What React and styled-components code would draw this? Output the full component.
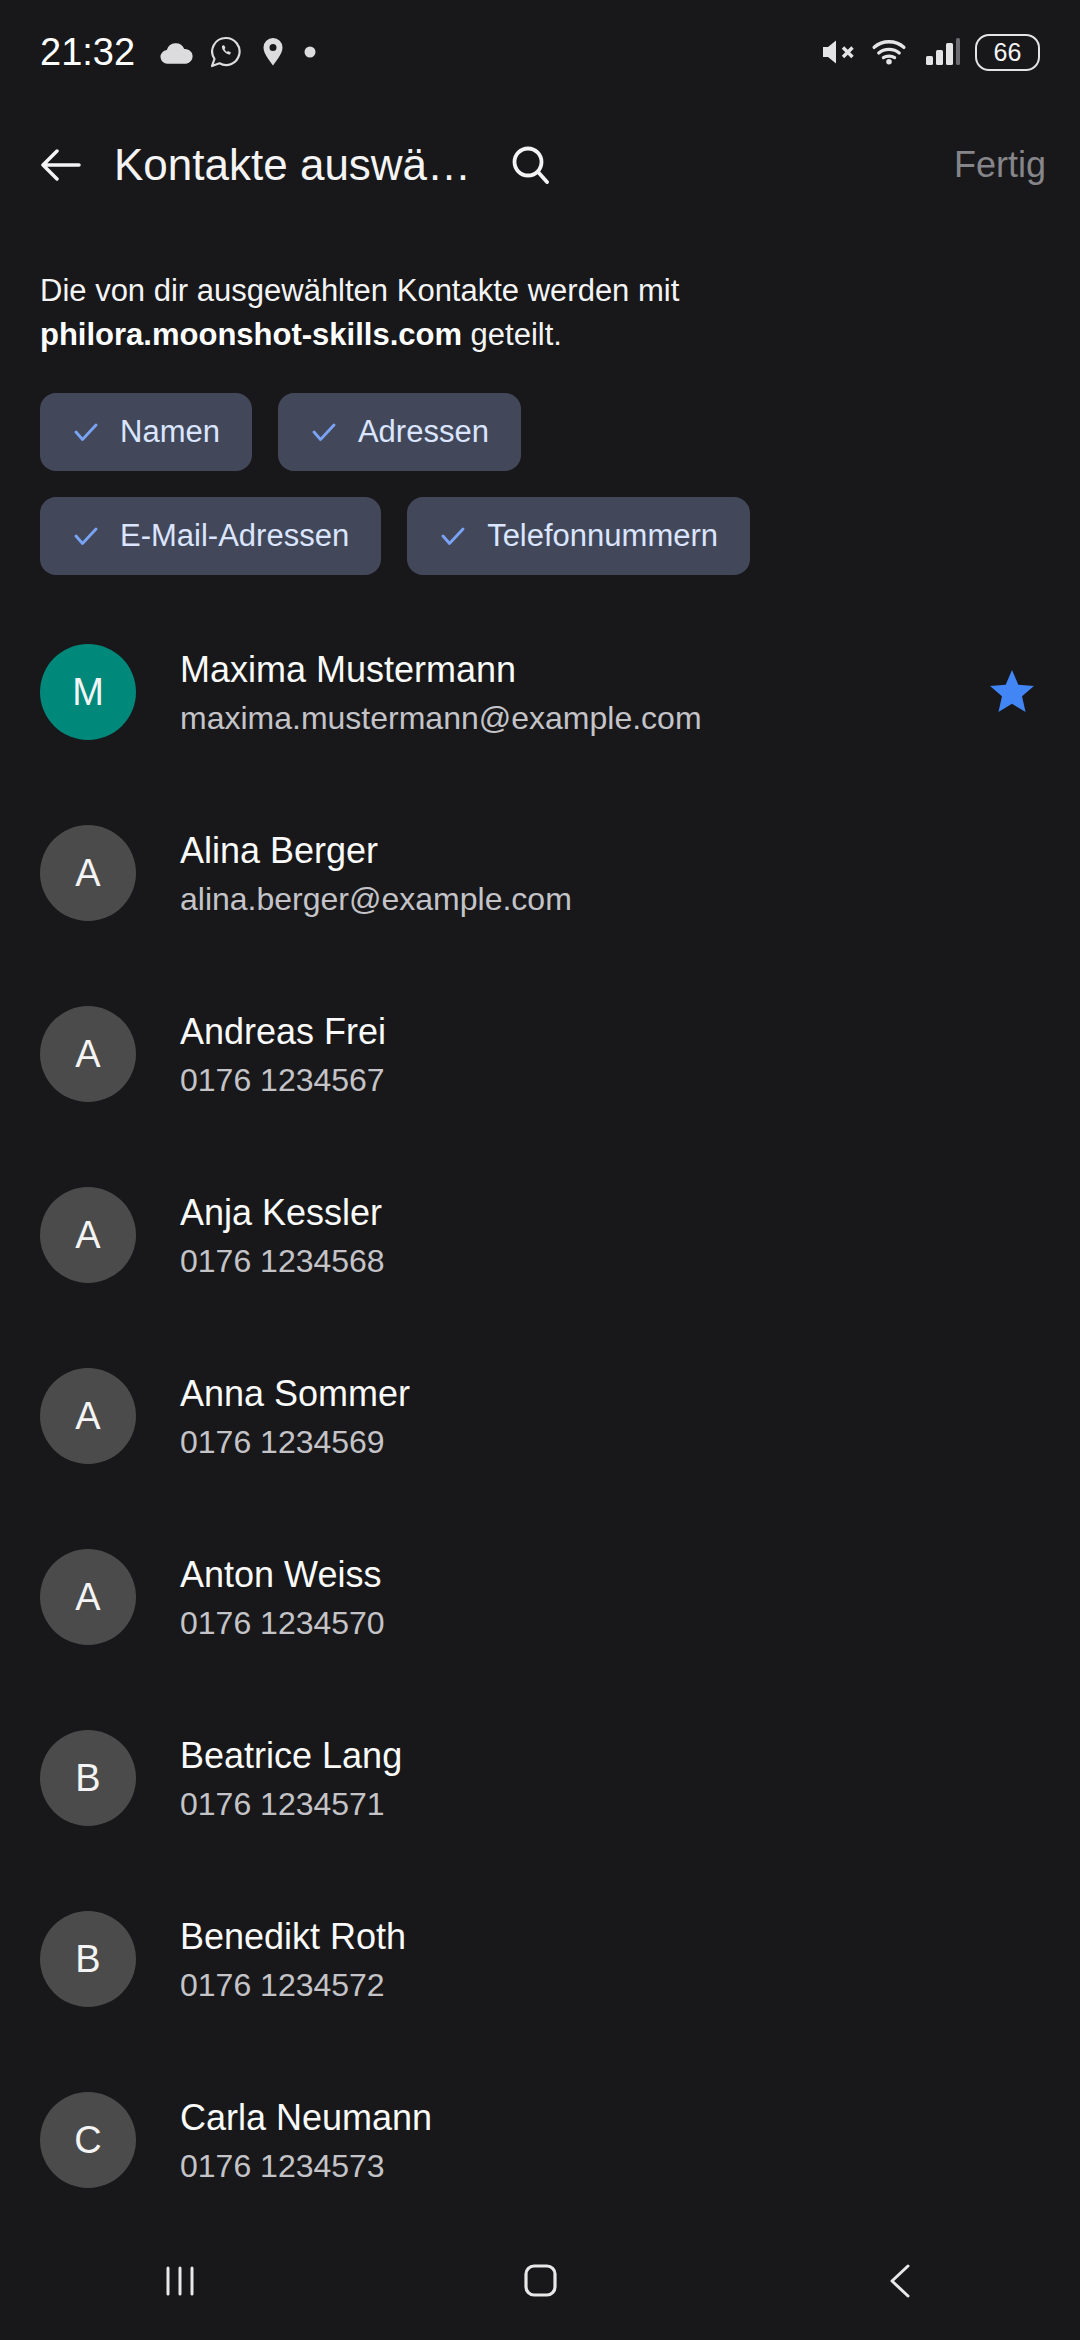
import React from "react";
import styled, { createGlobalStyle } from "styled-components";

const Global = createGlobalStyle`
  html, body { margin: 0; padding: 0; background: #18181b; height: 2340px; overflow: hidden; }
  body { font-family: "Liberation Sans", Arial, sans-serif; }
`;
const Root = styled.div`position: relative; width: 1080px; height: 2340px; overflow: hidden;`;
const Page = styled.div`
  width: 1080px; height: 2340px; background: #18181b; color: #fff;
  display: flex; flex-direction: column; overflow: hidden;
`;
const Icon = styled.svg`display: block; flex: none; margin-left: ${p => p.$ml || 0}px; margin-top: ${p => p.$mt || 0}px;`;
const StatusBar = styled.div`
  height: 104px; padding: 0 40px; display: flex; align-items: center; justify-content: space-between; flex: none;
`;
const StatusGroup = styled.div`display: flex; align-items: center;`;
const Clock = styled.span`font-size: 38px; color: #fff; width: 120px; line-height: 1;`;
const Battery = styled.span`
  width: 65px; height: 37px; box-sizing: border-box; border: 2px solid #e4e4e7; border-radius: 14px;
  font-size: 25px; color: #f4f4f5; display: flex; align-items: center; justify-content: center; margin-left: 15px;
`;
const Header = styled.div`
  height: 122px; padding: 0 34px 0 41px; display: flex; align-items: center; flex: none;
`;
const Title = styled.h1`
  margin: 0 0 0 33px; font-weight: 400; font-size: 44px; color: #f4f4f5; width: 357px; white-space: nowrap; line-height: 56px;
`;
const Done = styled.span`font-size: 36px; color: #86868a; margin-left: auto;`;
const Intro = styled.p`
  margin: 0; padding: 43px 40px 0; font-size: 31px; line-height: 44px; color: #f4f4f5;
  strong { color: #fff; font-weight: 700; }
`;
const Chips = styled.div`
  display: flex; flex-direction: column; gap: 26px; padding: 36px 40px 0;
`;
const ChipRow = styled.div`display: flex; gap: 26px;`;
const Chip = styled.div`
  height: 78px; box-sizing: border-box; padding: 0 32px 0 34px; border-radius: 16px; background: #424859;
  display: flex; align-items: center; gap: 22px; font-size: 31px; color: #dbe5ff;
`;
const List = styled.div`display: flex; flex-direction: column; padding-top: 69px; flex: 1;`;
const Row = styled.div`
  height: 181px; padding: 0 40px; box-sizing: border-box; display: flex; align-items: flex-start; gap: 44px;
`;
const Avatar = styled.div`
  width: 96px; height: 96px; border-radius: 50%; flex: none; background: ${p => p.$bg};
  display: flex; align-items: center; justify-content: center; font-size: 38px; color: #f4f4f5;
`;
const Texts = styled.div`flex: 1; display: flex; flex-direction: column; margin-top: 2px;`;
const Name = styled.div`font-size: 36px; line-height: 48px; color: #fafafa;`;
const Sub = styled.div`font-size: 32px; line-height: 46px; color: #c4c4c8; margin-top: 1px;`;
const FavIcon = styled.svg`display: block; flex: none; margin-top: 26px; margin-right: 6px;`;
const NavBar = styled.div`
  position: absolute; left: 0; right: 0; top: 2221px; height: 119px; background: #18181b;
  display: flex; align-items: center; justify-content: space-around;
`;
const NavSlot = styled.div`display: flex; width: 360px; justify-content: center;`;

const Check = () => (
  <Icon width="24" height="18" viewBox="0 0 24 18" fill="none" stroke="#7ba3f5" strokeWidth="2.800" strokeLinecap="round" strokeLinejoin="round"><path d="M2 9l6.500 7.500L22 2" /></Icon>
);
const Star = () => (
  <FavIcon width="44" height="42" viewBox="0 0 46 44"><path d="M23 0l6.600 15.400L46 16.800 33.500 27.600 37.200 44 23 35.400 8.800 44l3.700-16.400L0 16.800l16.400-1.400z" fill="#4285f4" /></FavIcon>
);

const contacts = [
  ["M", "Maxima Mustermann", "maxima.mustermann@example.com", "#00897b", true],
  ["A", "Alina Berger", "alina.berger@example.com"],
  ["A", "Andreas Frei", "0176 1234567"],
  ["A", "Anja Kessler", "0176 1234568"],
  ["A", "Anna Sommer", "0176 1234569"],
  ["A", "Anton Weiss", "0176 1234570"],
  ["B", "Beatrice Lang", "0176 1234571"],
  ["B", "Benedikt Roth", "0176 1234572"],
  ["C", "Carla Neumann", "0176 1234573"],
];

export default function App() {
  return (
    <Root>
      <Global />
      <Page>
        <StatusBar>
          <StatusGroup>
            <Clock>21:32</Clock>
            <Icon width="33" height="24" viewBox="0 0 34 24"><path d="M8 24a7 7 0 0 1-1-14 9.500 9.500 0 0 1 18-1 7.500 7.500 0 0 1 2 15z" fill="#dcdcde" /></Icon>
            <Icon width="30" height="32" viewBox="0 0 30 32" fill="none" $ml={18}><path d="M15 2a13.500 13.500 0 1 1-6.500 25.300L1 30l2.500-7A13.500 13.500 0 0 1 15 2z" stroke="#dcdcde" strokeWidth="2.200" strokeLinejoin="round" /><path d="M11 10c-1 3 4 9 8 8.500l1-2-3-1.500-1 1c-1-.5-2-2-2.500-3l1-1-1.500-3z" fill="#dcdcde" /></Icon>
            <Icon width="20" height="28" viewBox="0 0 20 28" $ml={22}><path fillRule="evenodd" d="M10 0a9.500 9.500 0 0 1 9.500 9.500C19.500 16 13 23 10 27.500 7 23 .5 16 .5 9.500A9.500 9.500 0 0 1 10 0zm0 6a3.500 3.500 0 1 0 0 7 3.500 3.500 0 0 0 0-7z" fill="#dcdcde" /></Icon>
            <Icon width="12" height="12" viewBox="0 0 12 12" $ml={21}><circle cx="6" cy="6" r="5.500" fill="#dcdcde" /></Icon>
          </StatusGroup>
          <StatusGroup>
            <Icon width="32" height="24" viewBox="0 0 32 24"><path d="M0 7h5l8-6.500v23L5 17H0z" fill="#e4e4e7" /><path d="M20 7.500l9.500 9.500M29.500 7.500L20 17" stroke="#e4e4e7" strokeWidth="3.400" /></Icon>
            <Icon width="36" height="26" viewBox="0 0 36 28" fill="none" stroke="#e4e4e7" strokeWidth="3.600" strokeLinecap="round" $ml={16}><path d="M2 9c9-8 23-8 32 0M7 15c6-5 16-5 22 0M12 20c3-2 9-2 12 0" /><circle cx="18" cy="24.500" r="3" fill="#e4e4e7" stroke="none" /></Icon>
            <Icon width="34" height="28" viewBox="0 0 34 28" $ml={19}><rect x="0" y="18" width="7" height="9" rx="1.500" fill="#e4e4e7" /><rect x="10" y="12" width="7" height="15" rx="1.500" fill="#e4e4e7" /><rect x="20" y="5" width="7" height="22" rx="1.500" fill="#e4e4e7" /><rect x="30" y="0" width="4" height="27" rx="1.500" fill="#6b6b70" /></Icon>
            <Battery>66</Battery>
          </StatusGroup>
        </StatusBar>
        <Header>
          <Icon width="40" height="32" viewBox="0 0 40 32" fill="none" stroke="#f4f4f5" strokeWidth="3.500" strokeLinecap="round" strokeLinejoin="round"><path d="M38 16H3M16 2L2 16l14 14" /></Icon>
          <Title>Kontakte auswä…</Title>
          <Icon width="38" height="38" viewBox="0 0 38 38" fill="none" stroke="#f4f4f5" strokeWidth="3.800" strokeLinecap="round" $ml={41}><circle cx="16" cy="16" r="13.500" /><path d="M26.500 26.500L35 36" /></Icon>
          <Done>Fertig</Done>
        </Header>
        <Intro>Die von dir ausgewählten Kontakte werden mit<br /><strong>philora.moonshot-skills.com</strong> geteilt.</Intro>
        <Chips>
          <ChipRow>
            <Chip><Check />Namen</Chip>
            <Chip><Check />Adressen</Chip>
          </ChipRow>
          <ChipRow>
            <Chip><Check />E-Mail-Adressen</Chip>
            <Chip><Check />Telefonnummern</Chip>
          </ChipRow>
        </Chips>
        <List>
          {contacts.map(([l, n, s, bg, star]) => (
            <Row key={n}>
              <Avatar $bg={bg || "#4a4b4a"}>{l}</Avatar>
              <Texts><Name>{n}</Name><Sub>{s}</Sub></Texts>
              {star && <Star />}
            </Row>
          ))}
        </List>
      </Page>
      <NavBar>
        <NavSlot><Icon width="28" height="30" viewBox="0 0 28 30" stroke="#e8e8e8" strokeWidth="3" strokeLinecap="round"><path d="M2 2v26M14 2v26M26 2v26" /></Icon></NavSlot>
        <NavSlot><Icon width="33" height="33" viewBox="0 0 33 33" fill="none" stroke="#e8e8e8" strokeWidth="3.200"><rect x="2" y="2" width="29" height="29" rx="8" /></Icon></NavSlot>
        <NavSlot><Icon width="20" height="34" viewBox="0 0 20 34" fill="none" stroke="#e8e8e8" strokeWidth="3" strokeLinecap="round" strokeLinejoin="round"><path d="M18 2L2 17l16 15" /></Icon></NavSlot>
      </NavBar>
    </Root>
  );
}
